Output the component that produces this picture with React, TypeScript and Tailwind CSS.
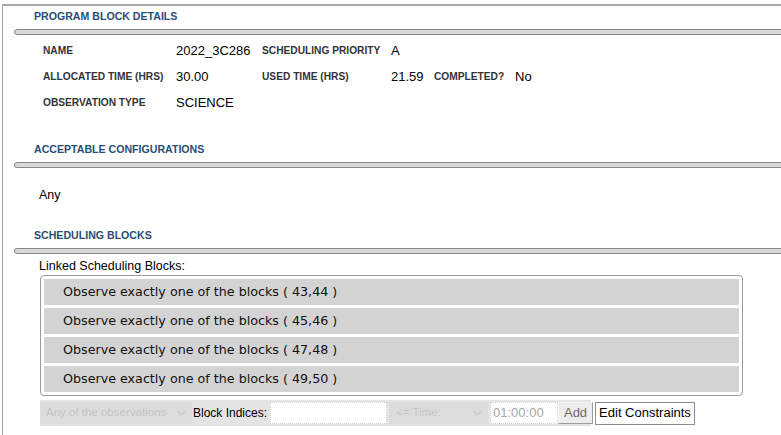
import type { ReactNode } from "react";

const sans = { fontFamily: '"Liberation Sans", Arial, sans-serif' };

function SectionHeader({ title }: { title: string }) {
    return (
        <>
            <div className="h-[20px] pt-[2px] flex items-center pl-[31px] text-[10.6px] font-bold text-[#2a4d74]">
                {title}
            </div>
            <div className="mt-[3px] ml-[11px] -mr-[6px] h-[6px] border border-[#878787] bg-[#d9d9d9] rounded-l-full" />
        </>
    );
}

function Label({ children, w }: { children: ReactNode; w: string }) {
    return (
        <div className={`${w} shrink-0 whitespace-nowrap text-[10.2px] font-bold text-[#333]`}>
            {children}
        </div>
    );
}

function Value({ children, w }: { children: ReactNode; w: string }) {
    return <div className={`${w} shrink-0 text-[13px] text-black`}>{children}</div>;
}

const links = ["43,44", "45,46", "47,48", "49,50"];

export default function App() {
    return (
        <div className="w-[781px] h-[435px] overflow-hidden bg-white pt-[4px] pl-[2px]" style={sans}>
            <div className="h-full border-t-2 border-l border-[#a6a6a6] overflow-hidden">
                <SectionHeader title="PROGRAM BLOCK DETAILS" />

                <div className="pl-[40px] mt-[3px]">
                    <div className="h-[26px] flex items-center">
                        <Label w="w-[133px]">NAME</Label>
                        <Value w="w-[86px]">2022_3C286</Value>
                        <Label w="w-[129px]">SCHEDULING PRIORITY</Label>
                        <Value w="w-[43px]">A</Value>
                    </div>
                    <div className="h-[26px] flex items-center">
                        <Label w="w-[133px]">ALLOCATED TIME (HRS)</Label>
                        <Value w="w-[86px]">30.00</Value>
                        <Label w="w-[129px]">USED TIME (HRS)</Label>
                        <Value w="w-[43px]">21.59</Value>
                        <Label w="w-[81px]">COMPLETED?</Label>
                        <Value w="w-[40px]">No</Value>
                    </div>
                    <div className="h-[26px] flex items-center">
                        <Label w="w-[133px]">OBSERVATION TYPE</Label>
                        <Value w="w-[86px]">SCIENCE</Value>
                    </div>
                </div>

                <div className="mt-[23px]">
                    <SectionHeader title="ACCEPTABLE CONFIGURATIONS" />
                </div>
                <div className="h-[26px] mt-[14px] flex items-center pl-[36px] text-[12.5px]">Any</div>

                <div className="mt-[17px]">
                    <SectionHeader title="SCHEDULING BLOCKS" />
                </div>
                <div className="h-[18px] mt-[3px] flex items-center pl-[36px] text-[12.5px]">
                    Linked Scheduling Blocks:
                </div>

                <div className="ml-[37px] w-[703px] border border-[#9a9a9a] rounded-[4px] p-[3px] flex flex-col gap-[3px]">
                    {links.map((l) => (
                        <div
                            key={l}
                            className="h-[26px] bg-[#d3d3d3] flex items-center pl-[19px] text-[12.7px] text-[#111]"
                            style={{ fontFamily: '"DejaVu Sans", Verdana, sans-serif' }}
                        >
                            Observe exactly one of the blocks ( {l} )
                        </div>
                    ))}
                </div>

                <div className="mt-[4px] ml-[37px] flex items-center">
                    <div className="h-[26px] w-[551px] bg-[#e4e4e4] flex items-center">
                        <div className="shrink-0 h-[22px] w-[152px] bg-[#dcdcdc] flex items-center justify-between pl-[6px] pr-[6px] text-[11.5px] text-[#c4c4c4]">
                            <span className="whitespace-nowrap">Any of the observations</span>
                            <Chevron />
                        </div>
                        <span className="shrink-0 whitespace-nowrap ml-[1px] text-[12px] text-black">Block Indices:</span>
                        <div className="shrink-0 ml-[3px] h-[22px] w-[117px] bg-white border border-dotted border-[#cfcfcf]" />
                        <div className="shrink-0 ml-[2px] h-[22px] w-[99px] bg-[#dcdcdc] flex items-center justify-between pl-[7px] pr-[6px] text-[11.5px] text-[#c4c4c4]">
                            <span className="whitespace-nowrap">&lt;= Time:</span>
                            <Chevron />
                        </div>
                        <div className="shrink-0 ml-[2px] h-[22px] w-[68px] bg-white border border-dotted border-[#cfcfcf] flex items-center pl-[2px] text-[13px] text-[#a8a8a8]">
                            01:00:00
                        </div>
                        <div className="shrink-0 h-[22px] w-[35px] bg-[#ececec] border border-[#f4f4f4] border-r-[#9a9a9a] border-b-[#9a9a9a] flex items-center justify-center text-[13px] text-[#6a6a6a]">
                            Add
                        </div>
                    </div>
                    <div className="shrink-0 ml-[4px] h-[23px] w-[100px] bg-white border border-[#8c8c8c] flex items-center justify-center text-[13px] text-black whitespace-nowrap">
                        Edit Constraints
                    </div>
                </div>
            </div>
        </div>
    );
}

function Chevron() {
    return (
        <svg width="9" height="6" viewBox="0 0 9 6" fill="none" className="shrink-0">
            <path d="M0.5 0.8 L4.5 5 L8.5 0.8" stroke="#c0c0c0" strokeWidth="1" />
        </svg>
    );
}
